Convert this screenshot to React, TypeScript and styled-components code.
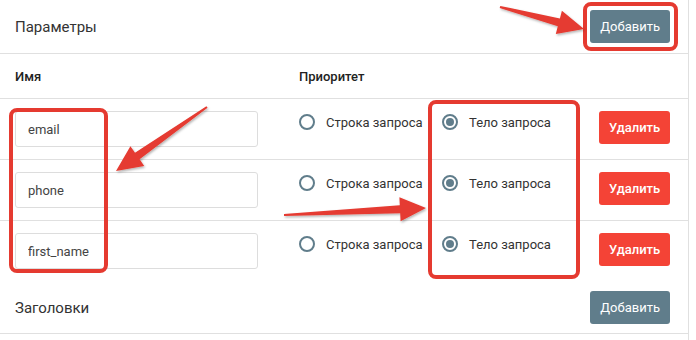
import React from 'react';
import styled, { createGlobalStyle } from 'styled-components';

const GlobalStyle = createGlobalStyle`
  html, body {
    margin: 0;
    padding: 0;
    background: #ffffff;
  }
  body {
    font-family: Roboto, "Noto Sans", "Liberation Sans", sans-serif;
    color: #333333;
  }
`;

const Page = styled.div`
  position: relative;
  width: 696px;
  height: 340px;
  overflow: hidden;
`;

const Panel = styled.div`
  width: 689px;
  height: 340px;
  border-right: 1px solid #e0e0e0;
  box-sizing: border-box;
`;

const SectionHeader = styled.div<{ $height: number; $bordered?: boolean }>`
  display: flex;
  align-items: center;
  justify-content: space-between;
  height: ${(p) => p.$height}px;
  padding: 0 18px 0 15px;
  border-bottom: ${(p) => (p.$bordered ? '1px solid #e0e0e0' : 'none')};
  box-sizing: border-box;
`;

const SectionTitle = styled.div`
  font-size: 15px;
  color: #333333;
`;

const Button = styled.button<{ $variant: 'grey' | 'red' }>`
  height: 33px;
  padding: 0 10px;
  border: none;
  border-radius: 3px;
  background: ${(p) => (p.$variant === 'grey' ? '#607d8b' : '#f44336')};
  color: #ffffff;
  font-family: Roboto, "Liberation Sans", sans-serif;
  font-size: 13px;
  font-weight: ${(p) => (p.$variant === 'grey' ? 400 : 500)};
  cursor: pointer;
`;

const Grid = styled.div`
  display: grid;
  grid-template-columns: 284px 300px 71px;
  padding-left: 15px;
  box-sizing: border-box;
`;

const HeadRow = styled(Grid)`
  height: 45px;
  align-items: center;
  border-bottom: 1px solid #e0e0e0;
  font-size: 13px;
  font-weight: 500;
  color: #222222;
`;

const Row = styled(Grid)<{ $last?: boolean }>`
  height: 61px;
  padding-top: 12px;
  align-items: start;
  border-bottom: ${(p) => (p.$last ? 'none' : '1px solid #e0e0e0')};
`;

const NameInput = styled.input`
  width: 243px;
  height: 36px;
  box-sizing: border-box;
  border: 1px solid #dddddd;
  border-radius: 3px;
  padding: 0 12px;
  font-family: Roboto, "Liberation Sans", sans-serif;
  font-size: 13px;
  color: #444444;
  outline: none;
`;

const Options = styled.div`
  display: grid;
  grid-template-columns: 143px auto;
  padding-top: 2px;
`;

const Option = styled.label`
  display: flex;
  align-items: center;
  gap: 11px;
  font-size: 13px;
  color: #333333;
  height: 18px;
  white-space: nowrap;
`;

const RadioMark = styled.span<{ $checked?: boolean }>`
  position: relative;
  width: 16px;
  height: 16px;
  border: 2px solid #607d8b;
  border-radius: 50%;
  box-sizing: border-box;
  flex-shrink: 0;

  &::after {
    content: '';
    display: ${(p) => (p.$checked ? 'block' : 'none')};
    position: absolute;
    left: 2px;
    top: 2px;
    width: 8px;
    height: 8px;
    border-radius: 50%;
    background: #607d8b;
  }
`;

const Overlay = styled.svg`
  position: absolute;
  left: 0;
  top: 0;
  pointer-events: none;
`;

const params = ['email', 'phone', 'first_name'];

const Arrow: React.FC<{ x1: number; y1: number; x2: number; y2: number }> = ({ x1, y1, x2, y2 }) => {
  const dx = x2 - x1;
  const dy = y2 - y1;
  const len = Math.sqrt(dx * dx + dy * dy);
  const ux = dx / len;
  const uy = dy / len;
  const px = -uy;
  const py = ux;
  const head = 26;
  const bx = x2 - ux * head;
  const by = y2 - uy * head;
  const pts = [
    [x1 + px * 1, y1 + py * 1],
    [bx + px * 4, by + py * 4],
    [bx + px * 12, by + py * 12],
    [x2, y2],
    [bx - px * 12, by - py * 12],
    [bx - px * 4, by - py * 4],
    [x1 - px * 1, y1 - py * 1],
  ]
    .map((p) => p.map((v) => v.toFixed(1)).join(','))
    .join(' ');
  return <polygon points={pts} fill="#e53a30" filter="url(#shadow)" />;
};

export default function App() {
  return (
    <Page>
      <GlobalStyle />
      <Panel>
        <SectionHeader $height={54} $bordered>
          <SectionTitle>Параметры</SectionTitle>
          <Button $variant="grey">Добавить</Button>
        </SectionHeader>
        <HeadRow>
          <div>Имя</div>
          <div>Приоритет</div>
          <div />
        </HeadRow>
        {params.map((name, i) => (
          <Row key={name} $last={i === params.length - 1}>
            <NameInput defaultValue={name} />
            <Options>
              <Option>
                <RadioMark />
                Строка запроса
              </Option>
              <Option>
                <RadioMark $checked />
                Тело запроса
              </Option>
            </Options>
            <Button $variant="red">Удалить</Button>
          </Row>
        ))}
        <SectionHeader $height={52} $bordered>
          <SectionTitle>Заголовки</SectionTitle>
          <Button $variant="grey">Добавить</Button>
        </SectionHeader>
      </Panel>

      <Overlay width={696} height={340} viewBox="0 0 696 340">
        <defs>
          <filter id="shadow" x="-20%" y="-20%" width="140%" height="140%">
            <feDropShadow dx="1" dy="1.5" stdDeviation="1.2" floodColor="#000" floodOpacity="0.3" />
          </filter>
        </defs>
        <rect x={585} y={4} width={91} height={45} rx={6} fill="none" stroke="#e53a30" strokeWidth={4} />
        <rect x={11} y={110} width={95} height={161} rx={6} fill="none" stroke="#e53a30" strokeWidth={4} />
        <rect x={430} y={102} width={148} height={175} rx={6} fill="none" stroke="#e53a30" strokeWidth={4} />
        <Arrow x1={500} y1={7} x2={584} y2={29} />
        <Arrow x1={207} y1={107} x2={116} y2={171} />
        <Arrow x1={284} y1={215} x2={426} y2={208} />
      </Overlay>
    </Page>
  );
}
